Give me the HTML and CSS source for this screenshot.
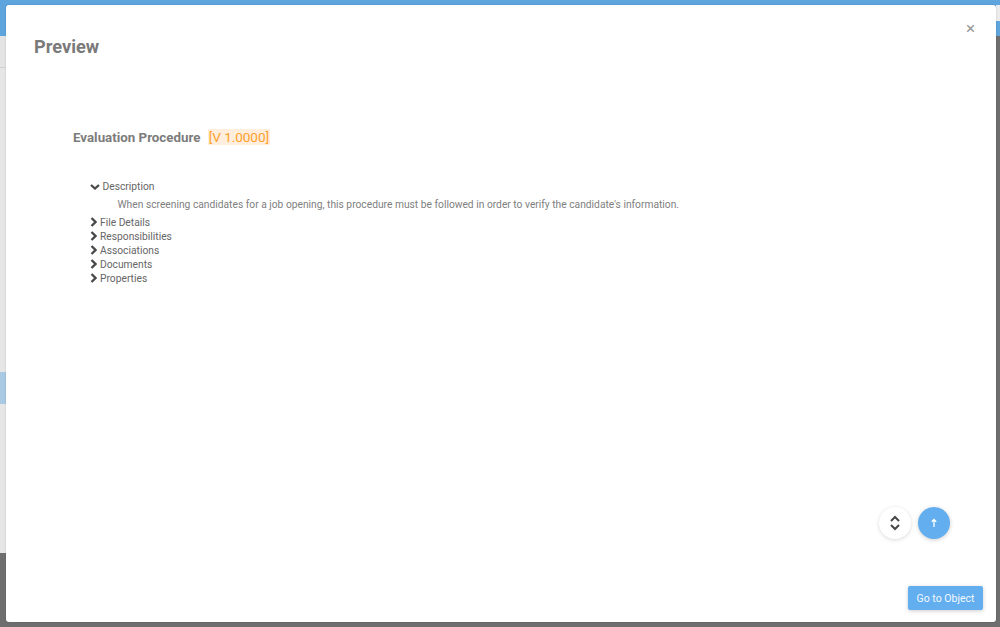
FILE: index.html
```html
<!DOCTYPE html>
<html lang="en">
<head>
<meta charset="utf-8">
<title>Preview</title>
<link rel="stylesheet" href="styles.css">
</head>
<body>
<div class="app">
  <div class="app-topbar"><span class="app-topbar-end"></span></div>
  <div class="app-subbar"></div>
  <div class="app-main"><div class="app-selected"></div></div>
</div>
<div class="modal">
  <header class="modal-head">
    <h1 class="modal-title">Preview</h1>
    <span class="close">×</span>
  </header>
  <div class="doc">
    <h2 class="doc-title">Evaluation Procedure <span class="version">[V 1.0000]</span></h2>
    <ul class="tree">
      <li class="tree-item open">
        <svg class="chev chev-down" viewBox="0 0 10 6"><path d="M1 1l4 3.500L9 1"/></svg><span>Description</span>
      </li>
      <li class="tree-desc">When screening candidates for a job opening, this procedure must be followed in order to verify the candidate's information.</li>
      <li class="tree-item"><svg class="chev" viewBox="0 0 7 10"><path d="M1.500 1 5.500 5l-4 4"/></svg><span>File Details</span></li>
      <li class="tree-item"><svg class="chev" viewBox="0 0 7 10"><path d="M1.500 1 5.500 5l-4 4"/></svg><span>Responsibilities</span></li>
      <li class="tree-item"><svg class="chev" viewBox="0 0 7 10"><path d="M1.500 1 5.500 5l-4 4"/></svg><span>Associations</span></li>
      <li class="tree-item"><svg class="chev" viewBox="0 0 7 10"><path d="M1.500 1 5.500 5l-4 4"/></svg><span>Documents</span></li>
      <li class="tree-item"><svg class="chev" viewBox="0 0 7 10"><path d="M1.500 1 5.500 5l-4 4"/></svg><span>Properties</span></li>
    </ul>
  </div>
  <div class="fabs">
    <span class="fab fab-white"><svg viewBox="0 0 10 18"><path d="M1 7l4-4 4 4M1 11l4 4 4-4"/></svg></span>
    <span class="fab fab-blue"><svg viewBox="0 0 12 12"><path d="M6 10V2.500M3.800 4.700 6 2.500l2.200 2.200"/></svg></span>
  </div>
  <button class="go-btn">Go to Object</button>
</div>
</body>
</html>
```

FILE: styles.css
```css
* { box-sizing: border-box; }
html, body { margin: 0; height: 100%; }
body { position: relative; width: 1000px; height: 627px; overflow: hidden; font-family: Roboto, "Liberation Sans", sans-serif; background: #6e6e6e; }
.app { height: 553px; display: flex; flex-direction: column; }
.app-topbar { flex: none; height: 36px; display: flex; justify-content: flex-end; padding-top: 5px; background: #5fa5dd; }
.app-topbar-end { width: 4px; height: 16px; background: #ececec; }
.app-subbar { flex: none; width: 996px; height: 32px; background: #e4e4e4; border-bottom: 1px solid #d2d2d2; }
.app-main { flex: 1; width: 996px; padding-top: 304px; background: #e6e6e6; }
.app-selected { height: 32px; background: #aac9e2; }
.modal { position: absolute; left: 6px; top: 4.500px; width: 990px; height: 617.500px; background: #fff; border-radius: 3px; box-shadow: 0 0 2px rgba(0,0,0,.2); color: #777; }
.modal-head { display: flex; justify-content: space-between; align-items: flex-start; padding: 32px 21px 0 28px; }
.modal-title { margin: 0; font-size: 18.200px; line-height: 20px; font-weight: 700; color: #7a7a7a; }
.close { font-size: 17px; line-height: 17px; color: #999; margin-top: -16.500px; }
.doc { padding: 72px 0 0 67px; }
.doc-title { margin: 0; font-size: 13.330px; line-height: 18px; font-weight: 700; color: #7c7c7c; }
.version { display: inline-block; margin-left: 4px; padding: 0 1px; font-size: 13.600px; line-height: 16px; letter-spacing: -.08px; font-weight: 400; color: #ffa02a; background: #ffeedd; }
.tree { list-style: none; margin: 0; padding: 32px 0 0 17px; font-size: 10.250px; }
.tree-item { display: flex; align-items: center; height: 14px; color: #666; }
.tree-item.open { height: 16px; }
.chev { width: 7px; height: 10px; flex: none; margin: -2px 3px 0 0; fill: none; stroke: #484848; stroke-width: 2.300; }
.chev-down { width: 10px; height: 6px; margin: 1px 2.500px 0 0; }
.tree-desc { padding: 3px 0 4px 27.500px; line-height: 14px; color: #808080; }
.fabs { position: absolute; left: 873px; top: 502.500px; display: flex; gap: 7px; }
.fab { display: flex; align-items: center; justify-content: center; width: 32px; height: 32px; border-radius: 50%; }
.fab-white { background: #fff; box-shadow: 0 1px 4px rgba(0,0,0,.15); }
.fab-white svg { width: 10px; height: 18px; fill: none; stroke: #484848; stroke-width: 2; }
.fab-blue { background: #62aeee; box-shadow: 0 1px 4px rgba(0,0,0,.2); }
.fab-blue svg { width: 12px; height: 12px; fill: none; stroke: #fff; stroke-width: 1.300; }
.go-btn { position: absolute; left: 902px; top: 581.500px; width: 75px; height: 24px; padding: 0; border: 0; border-radius: 2px; background: #62aeee; color: #f4f9fe; font: 400 10.500px Roboto, sans-serif; box-shadow: 0 1px 4px rgba(0,0,0,.2); }
```
